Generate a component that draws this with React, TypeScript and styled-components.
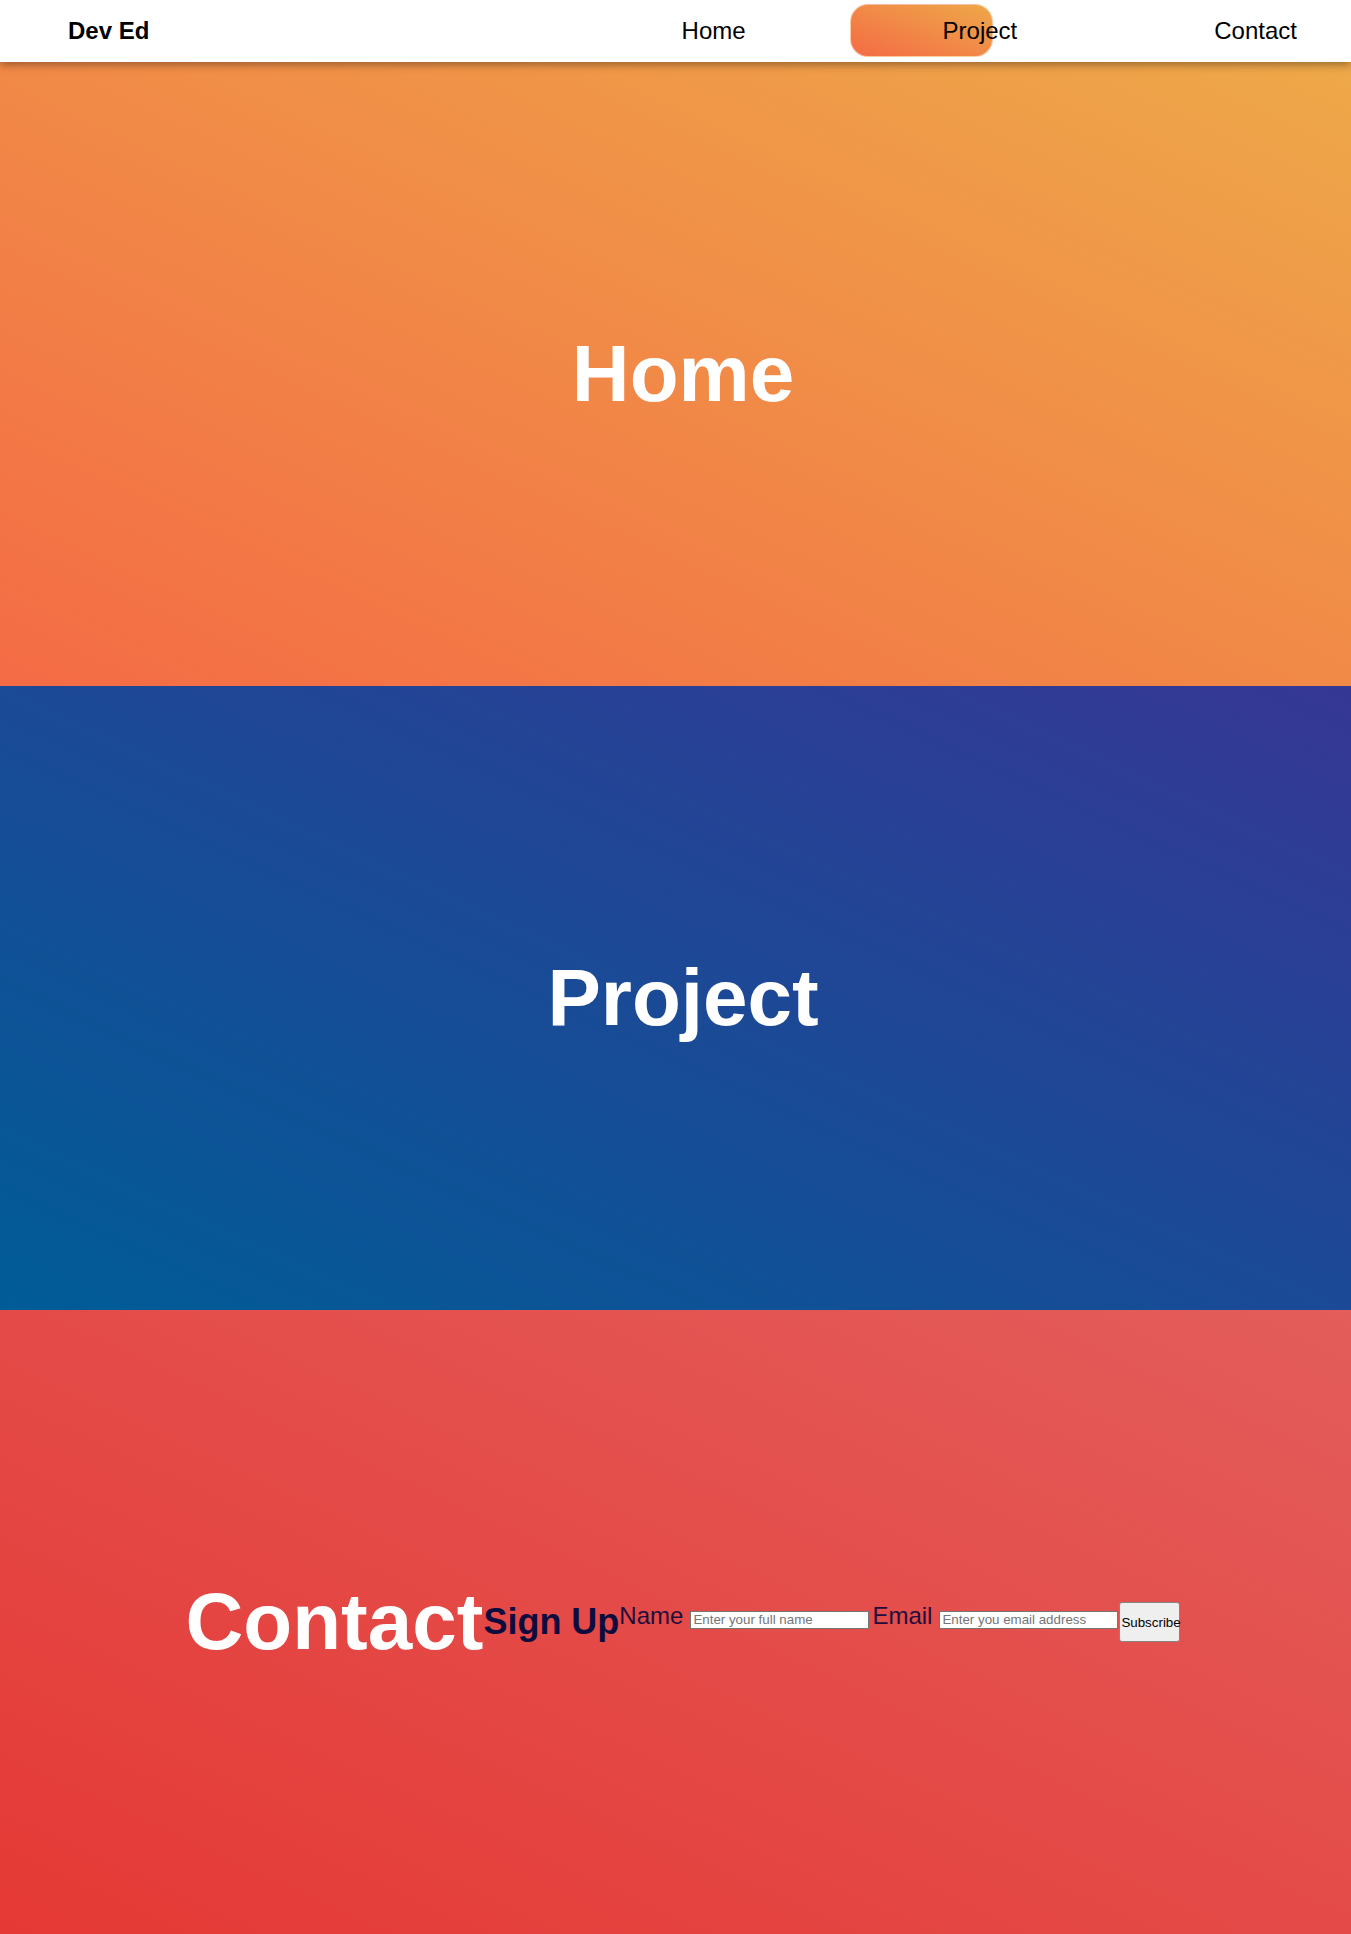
import React from 'react';
import styled, { createGlobalStyle } from 'styled-components';

const GlobalStyle = createGlobalStyle`
  html, body {
    margin: 0;
    padding: 0;
  }
  body {
    font-family: "Liberation Sans", Arial, sans-serif;
  }
  * {
    box-sizing: border-box;
  }
`;

const Nav = styled.nav`
  position: sticky;
  top: 0;
  z-index: 10;
  height: 62px;
  padding: 0 54px 0 68px;
  display: flex;
  align-items: center;
  justify-content: space-between;
  background: #fff;
  box-shadow: 0 3px 8px rgba(0, 0, 0, 0.35);
`;

const Logo = styled.div`
  font-size: 24px;
  font-weight: 700;
  color: #000;
`;

const Links = styled.ul`
  position: relative;
  display: flex;
  gap: 197px;
  list-style: none;
  margin: 0;
  padding: 0;
`;

const LinkItem = styled.li`
  position: relative;
  z-index: 1;
  font-size: 24px;
  color: #000;
  cursor: pointer;
`;

const Indicator = styled.span`
  position: absolute;
  left: 850px;
  top: 4px;
  width: 143px;
  height: 53px;
  border-radius: 18px;
  background: linear-gradient(to top right, #f46b45, #eea849);
  border: 1px solid rgba(255, 255, 255, 0.5);
`;

const Section = styled.section<{ $bg: string }>`
  height: 624px;
  padding-left: 15px;
  display: flex;
  align-items: center;
  justify-content: center;
  background: ${p => p.$bg};
`;

const Title = styled.h1`
  margin: 0;
  font-size: 80px;
  font-weight: 700;
  color: #fff;
  line-height: 92px;
`;

const ContactRow = styled.div`
  display: flex;
  align-items: center;
`;

const SignUp = styled.h2`
  margin: 0;
  font-size: 36px;
  font-weight: 700;
  color: #0e0b3f;
`;

const Form = styled.form`
  display: flex;
  align-items: stretch;
  height: 40px;
`;

const Field = styled.label<{ $gap: number }>`
  font-size: 24px;
  color: #1f0c3a;
  white-space: nowrap;
  margin-left: ${p => p.$gap}px;
`;

const Input = styled.input`
  width: 179px;
  height: 18px;
  margin-left: 7px;
  padding: 0 2px;
  font-family: "Liberation Sans", Arial, sans-serif;
  font-size: 13.33px;
  border: 1px solid #767676;
  background: #fff;
  outline: none;

  &::placeholder {
    color: #757575;
  }
`;

const SubscribeButton = styled.button`
  width: 61px;
  margin-left: 1px;
  padding: 0 1px;
  font-family: "Liberation Sans", Arial, sans-serif;
  font-size: 13.33px;
  color: #000;
  background: #efefef;
  border: 1px solid #858585;
  border-radius: 3px;
  cursor: pointer;
`;

export default function App() {
  return (
    <>
      <GlobalStyle />
      <Nav>
        <Logo>Dev Ed</Logo>
        <Links>
          <LinkItem>Home</LinkItem>
          <LinkItem>Project</LinkItem>
          <LinkItem>Contact</LinkItem>
        </Links>
        <Indicator />
      </Nav>
      <Section $bg="linear-gradient(to top right, #f46b45, #eea849)">
        <Title>Home</Title>
      </Section>
      <Section $bg="linear-gradient(to top right, #005c97, #363795)">
        <Title>Project</Title>
      </Section>
      <Section $bg="linear-gradient(to top right, #e53935, #e35d5b)">
        <ContactRow>
          <Title>Contact</Title>
          <SignUp>Sign Up</SignUp>
          <Form onSubmit={e => e.preventDefault()}>
            <Field $gap={0}>
              Name
              <Input type="text" placeholder="Enter your full name" />
            </Field>
            <Field $gap={3}>
              Email
              <Input type="email" placeholder="Enter you email address" />
            </Field>
            <SubscribeButton type="submit">Subscribe</SubscribeButton>
          </Form>
        </ContactRow>
      </Section>
    </>
  );
}
